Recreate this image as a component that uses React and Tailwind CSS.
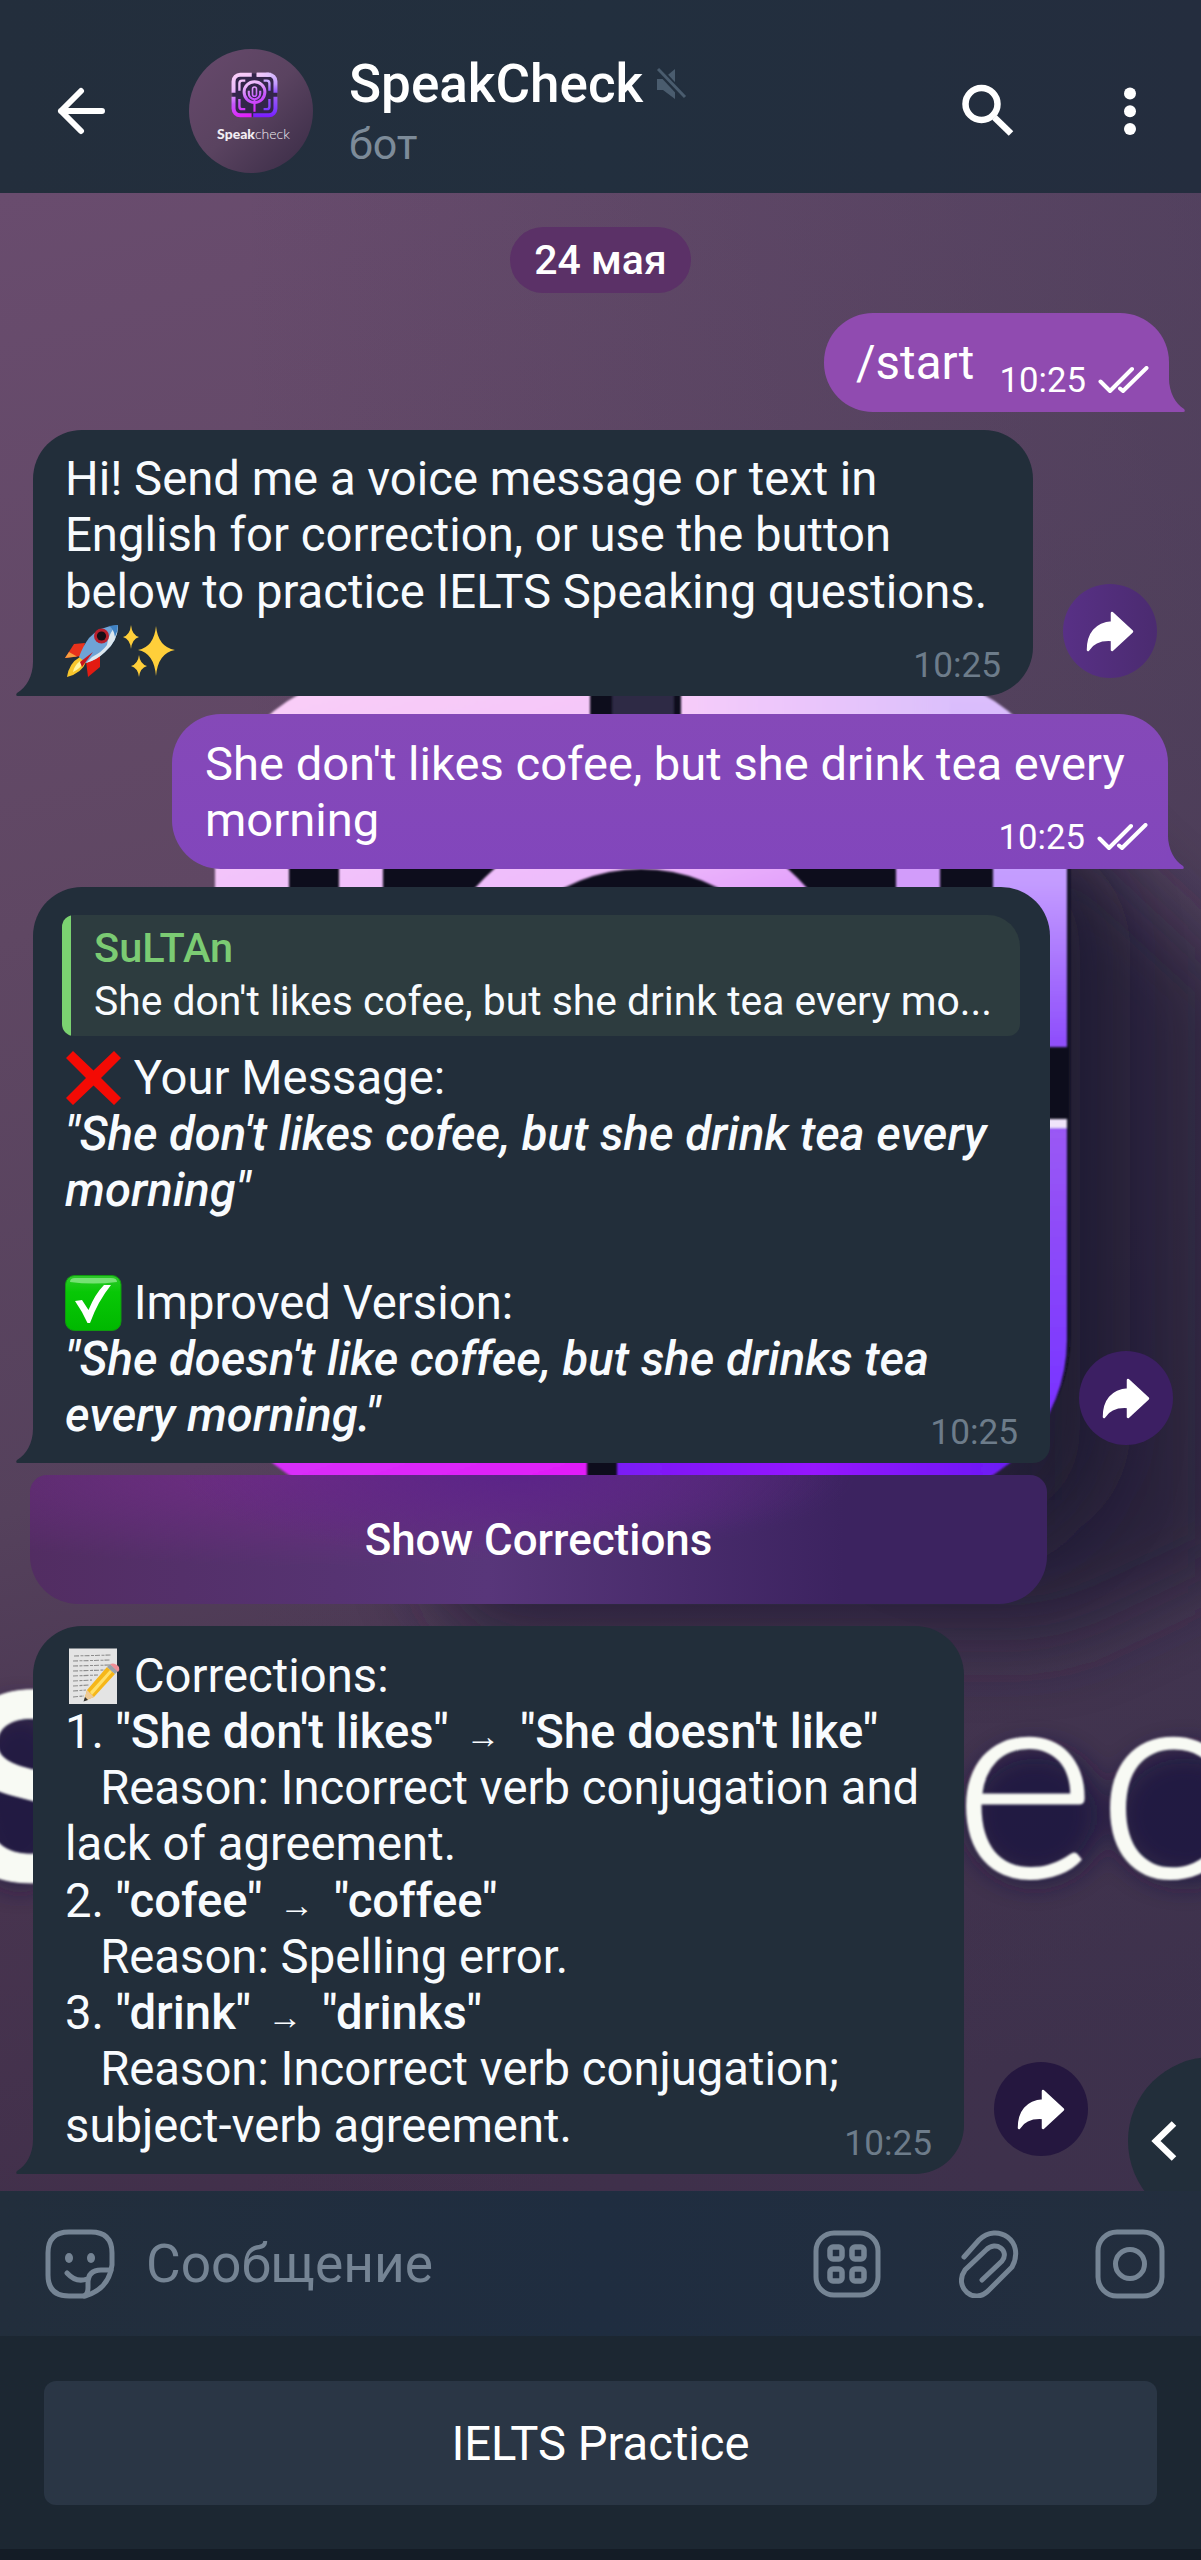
import React from "react";

function Logo() {
  return (
    <g>
      <g fill="none" strokeWidth="74">
        <path d="M590 712H375A123 123 0 0 0 252 835V1047M681 712H907M252 1119V1340A123 123 0 0 0 375 1463H587" stroke="url(#logoFill)" />
        <path d="M361 1010V870A50 50 0 0 1 411 820H470M361 1160V1300A50 50 0 0 0 411 1350H470" stroke="url(#logoFill)" strokeWidth="44" />
        <path d="M918 1010V870A50 50 0 0 0 868 820H810M918 1160V1300A50 50 0 0 1 868 1350H810" stroke="url(#rightFill)" strokeWidth="44" />
        <circle cx="641" cy="1034" r="193" stroke="url(#logoFill)" strokeWidth="56" />
        <path d="M535 1010V1060A106 106 0 0 0 747 1060V1010M641 1160V1400" stroke="url(#logoFill)" strokeWidth="40" />
        <path d="M860 712H907A123 123 0 0 1 1030 835V1047M1030 1119V1340A123 123 0 0 1 907 1463H617" stroke="url(#rightFill)" />
      </g>
      <rect x="604" y="940" width="74" height="170" rx="37" fill="none" stroke="url(#logoFill)" strokeWidth="30" />
      <path d="M683 675H950V749H681Z" fill="url(#topFade)" />
    </g>
  );
}

function Wallpaper() {
  return (
    <svg className="absolute inset-0 h-full w-full" viewBox="0 193 1201 1998" preserveAspectRatio="none" aria-hidden="true">
      <defs>
        <linearGradient id="wall" x1="0" y1="193" x2="520" y2="2191" gradientUnits="userSpaceOnUse">
          <stop offset="0" stopColor="#694c6e" />
          <stop offset="0.35" stopColor="#5f4763" />
          <stop offset="0.62" stopColor="#55415c" />
          <stop offset="0.8" stopColor="#47344f" />
          <stop offset="1" stopColor="#402f4a" />
        </linearGradient>
        <linearGradient id="side" x1="0" y1="0" x2="1201" y2="0" gradientUnits="userSpaceOnUse">
          <stop offset="0.2" stopColor="#3a3550" stopOpacity="0" />
          <stop offset="1" stopColor="#3a3550" stopOpacity="0.42" />
        </linearGradient>
        <linearGradient id="logoFill" x1="300" y1="700" x2="560" y2="1520" gradientUnits="userSpaceOnUse">
          <stop offset="0" stopColor="#f9cdf8" />
          <stop offset="0.3" stopColor="#eebcfb" />
          <stop offset="0.6" stopColor="#c456fb" />
          <stop offset="1" stopColor="#e516f8" />
        </linearGradient>
        <linearGradient id="rightFill" x1="0" y1="690" x2="0" y2="1500" gradientUnits="userSpaceOnUse">
          <stop offset="0" stopColor="#dcc0fc" />
          <stop offset="0.24" stopColor="#c39bff" />
          <stop offset="0.43" stopColor="#9050fc" />
          <stop offset="0.55" stopColor="#9a58f4" />
          <stop offset="0.85" stopColor="#7c38ff" />
          <stop offset="1" stopColor="#7d18fc" />
        </linearGradient>
        <linearGradient id="topFade" x1="681" y1="0" x2="950" y2="0" gradientUnits="userSpaceOnUse">
          <stop offset="0" stopColor="#f6ccf9" />
          <stop offset="0.4" stopColor="#ecc6fb" />
          <stop offset="1" stopColor="#dcc0fc" />
        </linearGradient>
        <linearGradient id="bottomFill" x1="617" y1="0" x2="1010" y2="0" gradientUnits="userSpaceOnUse">
          <stop offset="0" stopColor="#7a1cf5" />
          <stop offset="0.5" stopColor="#9612ff" />
          <stop offset="1" stopColor="#6b1bf4" />
        </linearGradient>
        <filter id="soft" x="-50%" y="-50%" width="200%" height="200%"><feGaussianBlur stdDeviation="38" /></filter>
        <filter id="halo" x="-50%" y="-50%" width="200%" height="200%"><feGaussianBlur stdDeviation="14" /></filter>
        <filter id="edge" x="-10%" y="-10%" width="120%" height="120%"><feGaussianBlur stdDeviation="1.3" /></filter>
        <clipPath id="bottomRight"><path d="M600 1420H1010V1463L985 1478H600Z" /></clipPath>
      </defs>
      <rect y="193" width="1201" height="1998" fill="url(#wall)" />
      <rect y="193" width="1201" height="1998" fill="url(#side)" />
      <path d="M1020 780L1110 870L1230 980V1560L1060 1640H480L420 1560L440 1500H1020Z" fill="#221c36" opacity="0.75" filter="url(#soft)" />
      <rect x="850" y="830" width="255" height="720" rx="120" fill="#17122c" opacity="0.6" filter="url(#soft)" />
      <rect x="228" y="690" width="842" height="796" rx="150" fill="#10101f" filter="url(#edge)" />
      <rect x="612" y="670" width="62" height="50" fill="#2e2a45" filter="url(#edge)" />
      <g filter="url(#edge)">
        <Logo />
        <rect x="896" y="850" width="44" height="60" fill="#d29cfa" />
        <rect x="993" y="1119" width="74" height="9" fill="#f0e4fa" />
        <g clipPath="url(#bottomRight)"><rect x="617" y="1426" width="400" height="74" fill="url(#bottomFill)" /></g>
      </g>
      <g fill="#1b1640" opacity="0.85" filter="url(#halo)">
        <ellipse cx="1035" cy="1815" rx="68" ry="66" />
        <ellipse cx="1185" cy="1815" rx="72" ry="66" />
        <ellipse cx="20" cy="1795" rx="55" ry="90" />
      </g>
      <g fill="#f8faf4" stroke="#f8faf4" filter="url(#edge)">
        <text x="-54" y="1880" fontFamily="Inter, sans-serif" fontWeight="600" fontSize="258" strokeWidth="1">S</text>
        <text x="953" y="1877" fontFamily="Lato, sans-serif" fontWeight="300" fontSize="275" strokeWidth="2.5">e</text>
        <text x="1097" y="1877" fontFamily="Lato, sans-serif" fontWeight="300" fontSize="275" strokeWidth="2.5">c</text>
      </g>
    </svg>
  );
}

function Avatar() {
  return (
    <div className="relative ml-[83px] flex size-[124px] shrink-0 flex-col items-center overflow-hidden rounded-full bg-linear-to-br from-[#67496c] via-[#5a4360] to-[#392b45]">
      <svg className="mt-[23px] ml-[6px] h-[46px] w-[47px]" viewBox="205 665 872 845">
        <rect x="230" y="690" width="830" height="800" rx="150" fill="#33264a" />
        <Logo />
      </svg>
      <div className="mt-[7px] ml-[5px] font-['Lato'] text-[14px] leading-[18px] whitespace-nowrap text-[#f2eef4]">
        <span className="font-black">Speak</span>
        <span className="font-light">check</span>
      </div>
    </div>
  );
}

function Header() {
  return (
    <header className="relative flex h-[193px] items-center bg-linear-to-r from-[#232e3c] via-[#222f3e] to-[#242d3e] pt-[28px]">
      <svg className="ml-[57px] h-[48px] w-[49px] shrink-0" viewBox="0 0 49 48" fill="none" stroke="#fff" strokeWidth="6" strokeLinecap="round" strokeLinejoin="round">
        <path d="M45 24H4M24 4L4 24L24 44" />
      </svg>
      <Avatar />
      <div className="ml-[36px] flex flex-col gap-[4px]">
        <div className="flex items-center">
          <h1 className="text-[53px] leading-[62px] font-medium whitespace-nowrap text-white">SpeakCheck</h1>
          <svg className="ml-[14px] h-[32px] w-[30px]" viewBox="0 0 30 32" fill="#4a5c6e">
            <path d="M0 11H6L18 1V31L6 22H0Z" />
            <path d="M1 1L28 30" stroke="#222f3e" strokeWidth="7" />
            <path d="M1 1L28 29" stroke="#4a5c6e" strokeWidth="3" />
          </svg>
        </div>
        <p className="text-[43px] leading-[50px] text-[#7d8b99]">бот</p>
      </div>
      <div className="ml-auto flex items-center gap-[110px] pr-[65px]">
        <svg className="h-[54px] w-[54px]" viewBox="0 0 54 54" fill="none" stroke="#fff">
          <circle cx="21.500" cy="20" r="16" strokeWidth="6.500" />
          <path d="M34.500 33.500L51 49.500" strokeWidth="6.500" />
        </svg>
        <svg className="h-[50px] w-[12px]" viewBox="0 0 12 50" fill="#fff">
          <circle cx="6" cy="7.500" r="6" />
          <circle cx="6" cy="25.200" r="6" />
          <circle cx="6" cy="43" r="6" />
        </svg>
      </div>
    </header>
  );
}

function Tail({ side, color }) {
  const left = side === "left";
  return (
    <svg className={left ? "absolute bottom-0 -left-[17px] h-[34px] w-[18px]" : "absolute bottom-0 -right-[16px] h-[34px] w-[17px] -scale-x-100"} viewBox="0 0 18 34" preserveAspectRatio="none">
      <path d="M18 0H17C17 14 10 26 1 31Q-1 34 2 34H18Z" fill={color} />
    </svg>
  );
}

function Checks() {
  return (
    <svg className="ml-[12px] h-[28px] w-[51px]" viewBox="0 0 51 28" fill="none" stroke="#fff" strokeWidth="4" strokeLinecap="round" strokeLinejoin="round">
      <path d="M2.500 15.500L12 25L34 3M22 22.500L25 25L48.500 2" />
    </svg>
  );
}

function Stamp({ out }) {
  return (
    <div className={out ? "absolute right-[20px] bottom-[12px] flex items-center text-[34.700px] leading-[40px] text-white" : "absolute right-[32px] bottom-[11px] text-[35.200px] leading-[40px] text-[#6d7c8a]"}>
      10:25
      {out && <Checks />}
    </div>
  );
}

function Share({ className }) {
  return (
    <button className={"flex size-[94px] shrink-0 items-center justify-center rounded-full " + className}>
      <svg className="h-[41px] w-[48px]" viewBox="0 0 48 41" fill="#fff" stroke="#fff" strokeWidth="2.500" strokeLinejoin="round">
        <path d="M26 2L46 20.500L26 39V29C14 28 7 31 2 39C2 23 10 12.500 26 11.500Z" />
      </svg>
    </button>
  );
}

function Rocket() {
  return (
    <svg className="h-[54px] w-[55px]" viewBox="0 0 55 54">
      <path d="M20 19L9 20L0 34L17 32Z" fill="#e8321c" />
      <path d="M4 28L0 34L12 32.500Z" fill="#f8a040" />
      <path d="M35 32L35 43L23 53L21 37Z" fill="#e31b12" />
      <path d="M15 33Q4 39 2 53Q17 49 21 38Z" fill="#f8c62c" />
      <path d="M15 37Q9 42 8 48Q15 45 18 39Z" fill="#fff6a0" />
      <path d="M53 1Q35 2 24 14Q18 22 14 33L21 39Q31 36 40 28Q53 17 53 1Z" fill="#6fa3d6" />
      <path d="M53 1Q44 7 42 21Q37 28 27 33L21 39Q32 36 40 28Q53 17 53 1Z" fill="#dde7ee" />
      <path d="M44 2L53 1Q53 7 50 13Q49 5 44 2Z" fill="#3f82c4" />
      <circle cx="36.500" cy="12" r="7.500" fill="#b81f2c" />
      <circle cx="36.500" cy="12" r="4.600" fill="#150e16" />
      <path d="M28 28L17 43L15 38Z" fill="#c9141c" />
    </svg>
  );
}

function Sparkles() {
  return (
    <svg className="h-[54px] w-[54px]" viewBox="0 0 54 54" fill="#ffcf3a">
      <path d="M34 2Q36 23 53 26Q36 29 34 52Q32 29 16 26Q32 23 34 2Z" />
      <path d="M9 1Q10 11 17 13Q10 15 9 25Q8 15 1 13Q8 11 9 1Z" />
      <path d="M17 31Q18 40 25 42Q18 44 17 53Q16 44 9 42Q16 40 17 31Z" />
    </svg>
  );
}

function CrossMark() {
  return (
    <svg className="-mb-[12px] inline-block h-[56px] w-[57px] align-baseline" viewBox="0 0 57 56">
      <path d="M8 1L28.500 20.500L49 1L56 8L36 28L56 48L49 55L28.500 35.500L8 55L1 48L21 28L1 8Z" fill="#f40a04" />
    </svg>
  );
}

function CheckMark() {
  return (
    <svg className="-mb-[12px] inline-block h-[56px] w-[57px] align-baseline" viewBox="0 0 57 56">
      <defs>
        <linearGradient id="green" x1="0" y1="0" x2="0" y2="1">
          <stop offset="0" stopColor="#2fc92b" />
          <stop offset="0.300" stopColor="#08c806" />
          <stop offset="1" stopColor="#00b800" />
        </linearGradient>
      </defs>
      <rect x="0.500" y="0.500" width="55.500" height="55" rx="9" fill="url(#green)" stroke="#109a10" />
      <path d="M5 7Q5 3 10 3H46Q52 3 52 7Q28 10 5 7Z" fill="#8be88a" opacity="0.800" />
      <path d="M10 26L17 25L23.500 35Q30 19 39 10L46 10Q33 26 25 48H22.500Q17 36 10 26Z" fill="#fff" />
    </svg>
  );
}

function Memo() {
  return (
    <svg className="-mb-[13px] inline-block h-[57px] w-[57px] align-baseline" viewBox="0 0 57 57">
      <rect x="4" y="0.500" width="48" height="55.500" fill="#e4e4e4" />
      <g stroke="#8c8c8c" strokeWidth="1.100" fill="none" strokeDasharray="5 1.500 3 1">
        <path d="M9 8L46 7M8 13L45 12M8 18L46 17M8 23L40 22M8 28L33 27M8 33L27 32M8 38L24 37M8 43L21 42M8 49L19 48" />
      </g>
      <path d="M22 42L42 19L50 26L29 49L19 53Z" fill="#f6b719" />
      <path d="M25 44L45 22L47 24L27 47Z" fill="#ffe06a" />
      <path d="M42 19L45 16L53 23L50 26Z" fill="#9aa2aa" />
      <path d="M45 16Q50 14 54 19Q55 22 53 24Z" fill="#f08e96" />
      <path d="M22 42L29 49L19 53Z" fill="#edc997" />
      <path d="M20 49L23 52L18.500 53.500Z" fill="#333" />
    </svg>
  );
}

function Arrow() {
  return <span className="inline-block w-[48px] text-center font-['Liberation_Serif'] text-[35px] leading-none"><span className="-ml-[3px]">→</span></span>;
}

function Line({ children, className = "" }) {
  return <p className={"h-[56.25px] whitespace-pre " + className}>{children}</p>;
}

const inText = "text-[47.250px] leading-[56.25px] text-[#f8fbfe]";

export default function App() {
  return (
    <div className="flex h-[2560px] w-full flex-col overflow-hidden bg-[#1c2732] font-['Roboto',sans-serif]">
      <Header />

      <main className="relative flex h-[1998px] flex-col overflow-hidden">
        <Wallpaper />
        <div className="relative flex flex-col">
          <div className="mt-[34px] flex h-[66px] w-[181px] items-center justify-center self-center rounded-full bg-[#5b3167] text-[41px] leading-none font-medium text-white">24 мая</div>

          <div className="relative mt-[20px] mr-[32px] h-[99px] w-[345px] self-end rounded-[49px] rounded-br-none bg-[#904bb0] pt-[22px] pl-[32px] text-[47.500px] leading-[56.25px] text-white">
            /start
            <Stamp out />
            <Tail side="right" color="#904bb0" />
          </div>

          <div className="mt-[17.5px] flex items-end pl-[33px]">
            <div className={"relative h-[266.5px] w-[1000px] rounded-[49px] rounded-bl-none bg-[#222e3a] pt-[21.5px] pl-[32px] " + inText}>
              <Line>Hi! Send me a voice message or text in</Line>
              <Line>English for correction, or use the button</Line>
              <Line>below to practice IELTS Speaking questions.</Line>
              <div className="mt-[4px] flex gap-[2px]"><Rocket /><Sparkles /></div>
              <Stamp />
              <Tail side="left" color="#222e3a" />
            </div>
            <Share className="mb-[18px] ml-[30px] bg-linear-to-r from-[#583086] to-[#4b2b70]" />
          </div>

          <div className="relative mt-[18px] mr-[33px] h-[154.5px] w-[996px] self-end rounded-[49px] rounded-br-none bg-linear-to-b from-[#8549b8] to-[#8246bc] pt-[21.5px] pl-[33px] text-[47.150px] leading-[56.25px] text-white">
            <Line>She don't likes cofee, but she drink tea every</Line>
            <Line>morning</Line>
            <Stamp out />
            <Tail side="right" color="#8246bc" />
          </div>

          <div className="mt-[18px] flex items-end pl-[33px]">
            <div className={"relative h-[576.5px] w-[1017px] rounded-t-[49px] rounded-br-[17px] bg-[#222e3a] pt-[28.5px] pl-[29px] " + inText}>
              <div className="flex h-[120.5px] w-[958px] overflow-hidden rounded-[12px] rounded-tr-[32px] bg-[#2d3c3f]">
                <div className="w-[9px] bg-[#7bd271]" />
                <div className="pt-[9px] pl-[23px]">
                  <p className="h-[53px] text-[41.500px] leading-[48px] font-medium text-[#7bcb73]">SuLTAn</p>
                  <p className="text-[40.850px] leading-[48px] whitespace-nowrap">She don't likes cofee, but she drink tea every mo...</p>
                </div>
              </div>
              <div className="mt-[14px] pl-[3px]">
                <Line><CrossMark /> Your Message:</Line>
                <Line className="font-medium italic">"She don't likes cofee, but she drink tea every</Line>
                <Line className="font-medium italic">morning"</Line>
                <Line> </Line>
                <Line><CheckMark /> Improved Version:</Line>
                <Line className="font-medium italic">"She doesn't like coffee, but she drinks tea</Line>
                <Line className="font-medium italic">every morning."</Line>
              </div>
              <Stamp />
              <Tail side="left" color="#222e3a" />
            </div>
            <Share className="mb-[18px] ml-[29px] bg-[#3c1f63]" />
          </div>

          <button className="mt-[11.5px] ml-[30px] h-[129.5px] w-[1017px] rounded-t-[17px] rounded-b-[48px] bg-[radial-gradient(ellipse_at_48%_0%,#5b2488_0%,transparent_45%),radial-gradient(ellipse_at_28%_0%,#6f2c84_0%,transparent_50%),linear-gradient(90deg,#522d62_0%,#58367a_45%,#3c2360_80%,#3c2360_100%)] pt-[3px] text-[43.900px] leading-none font-medium text-white">
            Show Corrections
          </button>

          <div className="mt-[22px] flex items-end pl-[33px]">
            <div className={"relative h-[547.5px] w-[931px] rounded-[49px] rounded-bl-none bg-[#222e3a] pt-[21.5px] pl-[32px] " + inText}>
              <Line><Memo /> Corrections:</Line>
              <Line>1. <b className="font-medium">"She don't likes"</b> <Arrow /> <b className="font-medium">"She doesn't like"</b></Line>
              <Line>{"   Reason: Incorrect verb conjugation and"}</Line>
              <Line>lack of agreement.</Line>
              <Line>2. <b className="font-medium">"cofee"</b> <Arrow /> <b className="font-medium">"coffee"</b></Line>
              <Line>{"   Reason: Spelling error."}</Line>
              <Line>3. <b className="font-medium">"drink"</b> <Arrow /> <b className="font-medium">"drinks"</b></Line>
              <Line>{"   Reason: Incorrect verb conjugation;"}</Line>
              <Line>subject-verb agreement.</Line>
              <Stamp />
              <Tail side="left" color="#222e3a" />
            </div>
            <Share className="mb-[17.5px] ml-[30px] bg-[#25173f]" />
          </div>
        </div>

        <button className="absolute -right-[95px] -bottom-[34px] h-[168px] w-[168px] rounded-full bg-[#222e3a]">
          <svg className="absolute top-[63px] left-[22px] h-[42px] w-[27px]" viewBox="0 0 27 42" fill="none" stroke="#fff" strokeWidth="6.500">
            <path d="M24 3.500L6 21L24 38.500" />
          </svg>
        </button>
      </main>

      <div className="flex h-[145px] shrink-0 items-center bg-linear-to-r from-[#222e3c] via-[#1f2d40] to-[#232e3e] pt-[1px] pr-[36px] pl-[45px] text-[#758494]">
        <svg className="h-[70px] w-[70px]" viewBox="0 0 70 70" fill="none" stroke="currentColor" strokeWidth="5" strokeLinecap="round" strokeLinejoin="round">
          <path d="M24 3H46Q67 3 67 24V36Q64 60 40 67H24Q3 67 3 46V24Q3 3 24 3Z" />
          <path d="M66 41H56Q43 41 43 54V59Q43 65 39 67M22 44Q31 54 42 50" />
          <ellipse cx="24" cy="29" rx="4" ry="5" fill="currentColor" stroke="none" />
          <ellipse cx="46" cy="29" rx="4" ry="5" fill="currentColor" stroke="none" />
        </svg>
        <span className="ml-[31px] text-[53.300px] leading-[58px]">Сообщение</span>
        <svg className="ml-auto h-[68px] w-[68px]" viewBox="0 0 68 68" fill="none" stroke="currentColor" strokeWidth="5">
          <rect x="3" y="3" width="62" height="62" rx="18" />
          <g strokeWidth="5.500">
            <rect x="17" y="17" width="12" height="12" rx="3" />
            <rect x="39" y="17" width="12" height="12" rx="3" />
            <rect x="17" y="39" width="12" height="12" rx="3" />
            <rect x="39" y="39" width="12" height="12" rx="3" />
          </g>
        </svg>
        <svg className="ml-[78px] h-[68px] w-[60px]" viewBox="0 0 60 68" fill="none" stroke="currentColor" strokeWidth="5" strokeLinecap="round">
          <path d="M5 27L20 10C38 -8 67 11 53 37L30 60C15 76 -6 57 6 40L27 20C37 10 51 21 43 31L23 50" />
        </svg>
        <svg className="ml-[76px] h-[70px] w-[70px]" viewBox="0 0 70 70" fill="none" stroke="currentColor" strokeWidth="5">
          <rect x="3" y="3" width="64" height="64" rx="19" />
          <circle cx="35" cy="35" r="14.500" />
        </svg>
      </div>

      <div className="h-[213px] shrink-0 bg-[#1c2732] px-[44px] pt-[44.5px]">
        <button className="h-[124.5px] w-full rounded-[12px] bg-[#2a3645] pt-[3px] text-[47.200px] leading-none text-white">IELTS Practice</button>
      </div>
      <div className="h-[11px] shrink-0 bg-[#141c26]" />
    </div>
  );
}
